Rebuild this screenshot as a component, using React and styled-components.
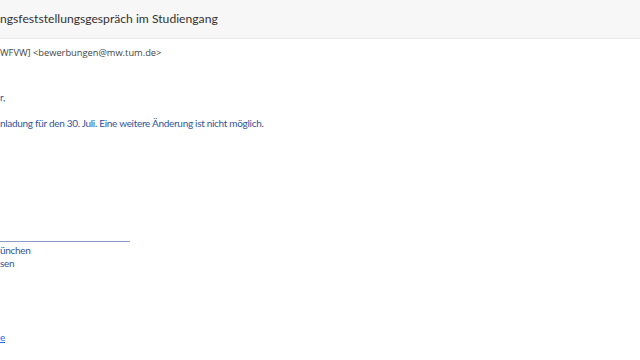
import React from 'react';
import styled, { createGlobalStyle } from 'styled-components';

const GlobalStyle = createGlobalStyle`
  html, body {
    margin: 0;
    padding: 0;
    background: #ffffff;
    overflow: hidden;
  }
  body {
    width: 640px;
    height: 360px;
  }
`;

const Page = styled.div`
  width: 640px;
  height: 360px;
  overflow: hidden;
  display: flex;
  flex-direction: column;
  background: #ffffff;
`;

const SubjectBar = styled.div`
  height: 37px;
  display: flex;
  align-items: center;
  background: #f8f7f7;
  border-bottom: 1px solid #ecebeb;
  font-family: Lato, "Open Sans", sans-serif;
  font-size: 12.15px;
  color: #323130;
  white-space: nowrap;
  padding-bottom: 1px;
`;

const Sender = styled.div`
  margin-top: 7px;
  font-family: "Open Sans", "Noto Sans", sans-serif;
  font-size: 9.3px;
  color: #444444;
  white-space: nowrap;
  line-height: 14px;
`;

const Body = styled.div`
  font-family: Lato, "Open Sans", sans-serif;
  font-size: 10px;
  letter-spacing: -0.3px;
  color: #2f5597;
  line-height: 13px;
  white-space: nowrap;
`;

const Line = styled.div`
  margin-top: ${p => p.gap || 0}px;
  height: 13px;
`;

const Rule = styled.div`
  margin-top: ${p => p.gap || 0}px;
  width: 130px;
  border-top: 1px solid #8a9cc6;
`;

const Link = styled.span`
  color: #1a6ee8;
  text-decoration: underline;
`;

export default function App() {
  return (
    <Page>
      <GlobalStyle />
      <SubjectBar>ngsfeststellungsgespräch im Studiengang</SubjectBar>
      <Sender>WFVW] &lt;bewerbungen@mw.tum.de&gt;</Sender>
      <Body>
        <Line gap={31}>r,</Line>
        <Line gap={13}>nladung für den 30. Juli. Eine weitere Änderung ist nicht möglich.</Line>
        <Rule gap={111} />
        <Line gap={2}>ünchen</Line>
        <Line gap={0}>sen</Line>
        <Line gap={61}><Link>e</Link></Line>
      </Body>
    </Page>
  );
}
